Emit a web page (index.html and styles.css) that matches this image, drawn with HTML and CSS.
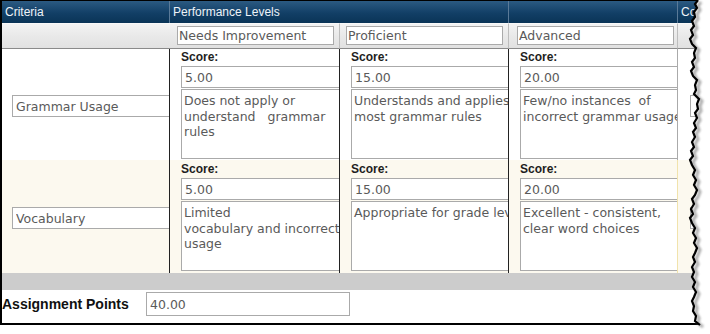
FILE: index.html
```html
<!DOCTYPE html>
<html lang="en">
<head>
    <meta charset="UTF-8">
    <meta name="viewport" content="width=device-width, initial-scale=1.0">
    <title>Rubric - Assignment</title>
    <link rel="stylesheet" href="styles.css">
</head>

<body>
    <div class="frame">
        <div class="rubric">
            <div class="th">Criteria</div>
            <div class="th th-line th-span">Performance Levels</div>
            <div class="th th-line"></div>
            <div class="th th-line">Comments</div>

            <div class="lv"></div>
            <div class="lv"><input class="lv-name" type="text" value="Needs Improvement"></div>
            <div class="lv lv-line"><input class="lv-name lv-mid" type="text" value="Proficient"></div>
            <div class="lv lv-line"><input class="lv-name" type="text" value="Advanced"></div>
            <div class="lv lv-line"></div>

            <div class="crit row-a"><input class="crit-name" type="text" value="Grammar Usage"></div>
            <div class="cell row-a">
                <div class="score-label">Score:</div>
                <input class="score" type="text" value="5.00">
                <textarea class="desc" wrap="off">Does not apply or
understand   grammar
rules</textarea>
            </div>
            <div class="cell row-a">
                <div class="score-label">Score:</div>
                <input class="score" type="text" value="15.00">
                <textarea class="desc" wrap="off">Understands and applies
most grammar rules</textarea>
            </div>
            <div class="cell row-a">
                <div class="score-label">Score:</div>
                <input class="score" type="text" value="20.00">
                <textarea class="desc" wrap="off">Few/no instances  of
incorrect grammar usage</textarea>
            </div>
            <div class="note row-a"><input class="crit-name" type="text" value=""></div>

            <div class="crit row-b"><input class="crit-name" type="text" value="Vocabulary"></div>
            <div class="cell row-b">
                <div class="score-label">Score:</div>
                <input class="score" type="text" value="5.00">
                <textarea class="desc" wrap="off">Limited
vocabulary and incorrect
usage</textarea>
            </div>
            <div class="cell row-b">
                <div class="score-label">Score:</div>
                <input class="score" type="text" value="15.00">
                <textarea class="desc" wrap="off">Appropriate for grade level</textarea>
            </div>
            <div class="cell row-b">
                <div class="score-label">Score:</div>
                <input class="score" type="text" value="20.00">
                <textarea class="desc" wrap="off">Excellent - consistent,
clear word choices</textarea>
            </div>
            <div class="note row-b"><input class="crit-name" type="text" value=""></div>
        </div>

        <div class="divider"></div>

        <div class="totals">
            <label for="points">Assignment Points</label>
            <input id="points" type="text" value="40.00">
        </div>
    </div>

    <!-- torn right edge of the screenshot -->
    <svg class="torn" width="30" height="334" viewBox="680 0 30 334">
        <defs>
            <filter id="soft" x="-50%" y="-10%" width="200%" height="120%">
                <feGaussianBlur stdDeviation="1"/>
            </filter>
        </defs>
        <polygon fill="#fff" points="698,0 695,4 697,8 694,12 695,17 692,21 694,26 691,30 693,35 690,39 692,44 696,48 694,53 695,58 692,62 694,67 691,71 693,76 697,80 695,85 696,90 694,94 699,99 697,104 698,109 695,113 697,118 694,123 696,128 693,132 695,137 692,142 694,147 691,151 693,156 690,160 692,165 695,170 693,175 696,180 694,185 697,190 695,195 692,199 694,204 691,209 693,214 690,218 692,223 695,228 693,233 696,238 694,243 697,248 695,253 693,257 695,262 692,267 694,272 692,277 695,282 693,287 696,292 694,297 692,301 694,306 693,311 696,316 695,321 700,325 703,334 710,334 710,0"/>
        <polyline fill="none" stroke="#777" stroke-width="3" opacity="0.6" filter="url(#soft)" transform="translate(3,2)" points="698,0 695,4 697,8 694,12 695,17 692,21 694,26 691,30 693,35 690,39 692,44 696,48 694,53 695,58 692,62 694,67 691,71 693,76 697,80 695,85 696,90 694,94 699,99 697,104 698,109 695,113 697,118 694,123 696,128 693,132 695,137 692,142 694,147 691,151 693,156 690,160 692,165 695,170 693,175 696,180 694,185 697,190 695,195 692,199 694,204 691,209 693,214 690,218 692,223 695,228 693,233 696,238 694,243 697,248 695,253 693,257 695,262 692,267 694,272 692,277 695,282 693,287 696,292 694,297 692,301 694,306 693,311 696,316 695,321 700,325"/>
        <polyline fill="none" stroke="#000" stroke-width="2.2" points="698,0 695,4 697,8 694,12 695,17 692,21 694,26 691,30 693,35 690,39 692,44 696,48 694,53 695,58 692,62 694,67 691,71 693,76 697,80 695,85 696,90 694,94 699,99 697,104 698,109 695,113 697,118 694,123 696,128 693,132 695,137 692,142 694,147 691,151 693,156 690,160 692,165 695,170 693,175 696,180 694,185 697,190 695,195 692,199 694,204 691,209 693,214 690,218 692,223 695,228 693,233 696,238 694,243 697,248 695,253 693,257 695,262 692,267 694,272 692,277 695,282 693,287 696,292 694,297 692,301 694,306 693,311 696,316 695,321 700,325"/>
    </svg>
</body>
</html>
```

FILE: styles.css
```css
body {
    margin: 0;
    padding: 0;
    background-color: #fff;
    font-family: 'Liberation Sans', Arial, sans-serif;
    color: #222;
}

.frame {
    width: 703px;
    border-top: 1px solid #000;
    border-left: 2px solid #000;
    border-bottom: 2px solid #000;
    overflow: hidden;
    background: #fff;
    box-shadow: 0 2px 3px rgba(0, 0, 0, 0.45);
}

.rubric {
    display: grid;
    grid-template-columns: 167px 170px 169px 169px 1fr;
    grid-template-rows: 22px 26px 111px 113px;
}

input, textarea {
    box-sizing: border-box;
    border: 1px solid #aaa;
    border-radius: 0;
    background: #fff;
    font-family: 'DejaVu Sans', Verdana, sans-serif;
    font-size: 12.5px;
    color: #5a5a5a;
    margin: 0;
    outline: none;
}

/* header row */
.th {
    background: linear-gradient(#2b5a82, #123f66 55%, #0a3457);
    color: #eef3f8;
    font-size: 12px;
    line-height: 22px;
    padding-left: 3px;
    white-space: nowrap;
    overflow: hidden;
}

.th-line {
    border-left: 1px solid #5a7a98;
    padding-left: 3px;
}

.th-span {
    grid-column: span 2;
}

/* level names */
.lv {
    box-sizing: border-box;
    background: linear-gradient(#f3f3f3, #e9e9e9 50%, #e1e1e1);
    border-top: 1px solid #f8f8f8;
    border-bottom: 1px solid #8a8a8a;
    padding: 2px 0 0 7px;
    overflow: hidden;
}

.lv-line {
    border-left: 1px solid #bdbdbd;
}

.lv-name {
    display: block;
    width: 157px;
    height: 19px;
    padding: 0 1px;
    margin-left: 1px;
}

.lv-mid {
    margin-left: -1px;
}

/* criteria rows */
.row-a {
    background: #fff;
    border-color: #aaa;
}

.row-b {
    background: #fcf9ef;
    border-color: #f1e3ac;
    padding-top: 1px;
}

.crit, .note {
    box-sizing: border-box;
    display: flex;
    align-items: center;
    padding-left: 10px;
    padding-top: 3px;
    overflow: hidden;
}

.note {
    border-left: 1px solid;
    padding-left: 12px;
}

.row-a.note {
    border-color: #aaa;
}

.row-b.note {
    border-color: #f1e3ac;
}

.crit-name {
    flex: none;
    width: 200px;
    height: 22px;
    padding: 0 3px;
}

.cell {
    box-sizing: border-box;
    border-left: 1px solid;
    padding-left: 11px;
    overflow: hidden;
}

.score-label {
    font-weight: bold;
    font-size: 12px;
    line-height: 16px;
    color: #1e1e1e;
}

.score {
    display: block;
    width: 200px;
    height: 22px;
    margin-top: 1px;
    padding: 0 3px;
}

.desc {
    display: block;
    width: 220px;
    height: 70px;
    margin-top: 1px;
    padding: 3px 2px;
    line-height: 15.6px;
    resize: none;
    overflow: hidden;
    white-space: pre;
}

.divider {
    height: 17px;
    background: #ccc;
}

.totals {
    display: flex;
    align-items: center;
    height: 33px;
    box-sizing: border-box;
    padding-top: 1px;
    padding-bottom: 6px;
}

.totals label {
    width: 144px;
    font-weight: bold;
    font-size: 14px;
    color: #111;
}

.totals input {
    width: 204px;
    height: 24px;
    padding: 0 3px;
}

.torn {
    position: absolute;
    top: 0;
    left: 680px;
}
```
